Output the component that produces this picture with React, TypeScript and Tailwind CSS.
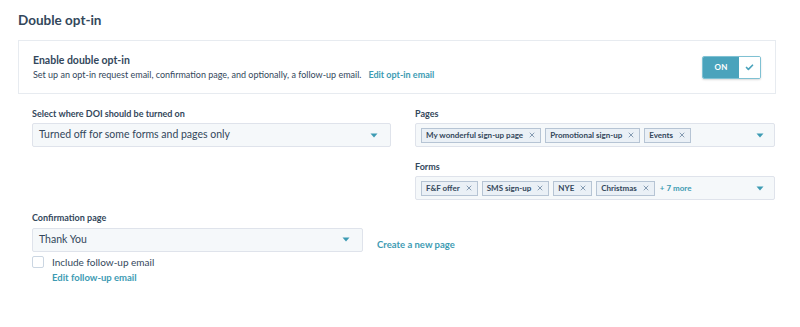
import React from 'react';
import { Check, X } from 'lucide-react';

const font = { fontFamily: 'Lato, "Open Sans", sans-serif' };

const Caret = () => (
  <svg width="8" height="5" viewBox="0 0 8 5" className="shrink-0">
    <path d="M0.5 0.5h7L4 4.5z" fill="#3d9bb3" />
  </svg>
);

const Tag = ({ label }: { label: string }) => (
  <span className="flex h-[15px] items-center gap-[5px] border border-[#b6c4d4] bg-[#eaf0f6] px-[4px] text-[8px] font-bold text-[#33475b]">
    {label}
    <X className="h-[8px] w-[8px] text-[#516f90]" strokeWidth={2} />
  </span>
);

const Select = ({ value, className }: { value: string; className?: string }) => (
  <div
    className={`flex h-[24px] items-center justify-between rounded-[2px] border border-[#dfe3eb] bg-[#f5f8fa] pl-[6px] pr-[12px] text-[10.5px] text-[#33475b] ${className ?? ''}`}
  >
    <span>{value}</span>
    <Caret />
  </div>
);

const TagSelect = ({ tags, more }: { tags: string[]; more?: string }) => (
  <div className="flex h-[24px] items-center justify-between rounded-[2px] border border-[#dfe3eb] bg-[#f5f8fa] pl-[5px] pr-[10px]">
    <div className="flex items-center gap-[4px]">
      {tags.map(t => (
        <Tag key={t} label={t} />
      ))}
      {more && <span className="ml-[1px] text-[8px] font-bold text-[#3d9bb3]">{more}</span>}
    </div>
    <Caret />
  </div>
);

const Label = ({ children }: { children: React.ReactNode }) => (
  <div className="text-[9px] font-bold leading-[12px] text-[#33475b]">{children}</div>
);

export default function App() {
  return (
    <div className="h-[327px] w-[800px] bg-white px-[18px] pt-[11px] text-[#33475b]" style={font}>
      <h1 className="text-[13.5px] font-bold leading-[18px] text-[#33475b]">Double opt-in</h1>

      <div className="mt-[11px] flex h-[54px] w-[758px] items-center justify-between border border-[#e7ebf0] pl-[14px] pr-[14px]">
        <div className="flex flex-col gap-[2px]">
          <div className="text-[10.5px] font-bold leading-[14px]">Enable double opt-in</div>
          <div className="text-[9px] leading-[12px] text-[#33475b]">
            Set up an opt-in request email, confirmation page, and optionally, a follow-up email.
            <span className="ml-[7px] font-bold text-[#3d9bb3]">Edit opt-in email</span>
          </div>
        </div>
        <div className="flex h-[23px] w-[59px] overflow-hidden rounded-[2px] border border-[#7fc1d3] shadow-[0_1px_2px_rgba(0,0,0,0.15)]">
          <div className="flex w-[36px] items-center justify-center bg-[#4aa3bc] text-[8px] font-bold tracking-wide text-white">
            ON
          </div>
          <div className="flex flex-1 items-center justify-center bg-white">
            <Check className="h-[9px] w-[9px] text-[#4aa3bc]" strokeWidth={4.5} />
          </div>
        </div>
      </div>

      <div className="ml-[14px] mt-[14px] grid w-[743px] grid-cols-[359px_360px] items-start gap-x-[24px]">
        <div className="flex flex-col gap-[3px]">
          <Label>Select where DOI should be turned on</Label>
          <Select value="Turned off for some forms and pages only" />
        </div>
        <div className="flex flex-col">
          <div className="flex flex-col gap-[3px]">
            <Label>Pages</Label>
            <TagSelect tags={['My wonderful sign-up page', 'Promotional sign-up', 'Events']} />
          </div>
          <div className="mt-[14px] flex flex-col gap-[3px]">
            <Label>Forms</Label>
            <TagSelect tags={['F&F offer', 'SMS sign-up', 'NYE', 'Christmas']} more="+ 7 more" />
          </div>
        </div>
      </div>

      <div className="ml-[14px] mt-[12px] flex flex-col">
        <Label>Confirmation page</Label>
        <div className="mt-[3px] flex items-center gap-[14px]">
          <Select value="Thank You" className="w-[331px]" />
          <span className="mt-[11px] text-[9.5px] font-bold text-[#3d9bb3]">Create a new page</span>
        </div>
        <div className="mt-[4px] flex items-center gap-[8px]">
          <div className="h-[12px] w-[12px] rounded-[2px] border border-[#cbd6e2] bg-white" />
          <span className="text-[10px] leading-[12px] text-[#33475b]">Include follow-up email</span>
        </div>
        <div className="ml-[20px] mt-[4px] text-[9.5px] font-bold leading-[12px] text-[#3d9bb3]">
          Edit follow-up email
        </div>
      </div>
    </div>
  );
}
